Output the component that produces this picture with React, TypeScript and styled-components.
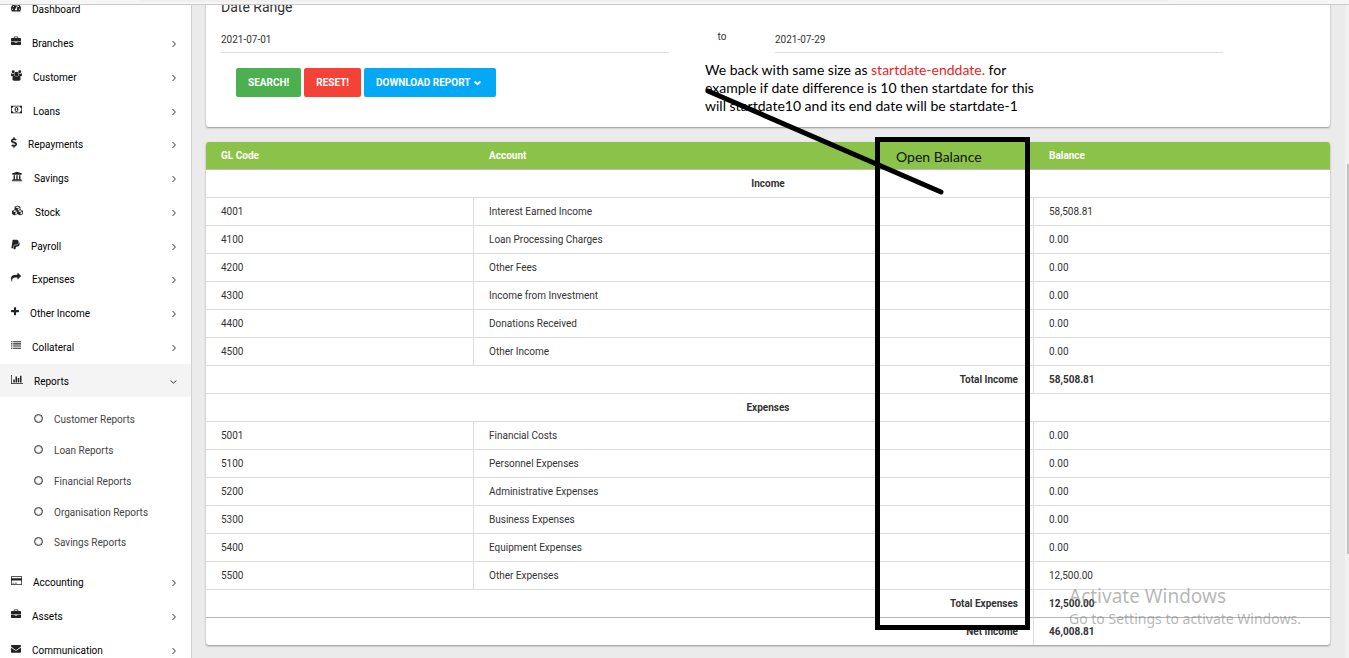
import React from 'react';
import styled, { createGlobalStyle } from 'styled-components';
import { FaCubes, FaDollarSign, FaPaypal, FaTachometerAlt, FaUniversity } from 'react-icons/fa';

const GlobalStyle = createGlobalStyle`
  * { box-sizing: border-box; }
  body {
    margin: 0;
    background: #ebebeb;
    color: #333;
    font: 400 10px/18px Roboto, sans-serif;
  }
  ul { list-style: none; margin: 0; padding: 0; }
  a { color: inherit; text-decoration: none; }
`;

const Shell = styled.div`
  display: flex;
  flex-direction: column;
  height: 100vh;
  overflow: hidden;
  position: relative;
`;

const TopBar = styled.header`
  flex: none;
  height: 5px;
  padding: 0 180px 0 140px;
  background: #f6f6f6;
  border-bottom: 1px solid #cbcbcb;
`;

const AddressStrip = styled.div`
  height: 2px;
  background: #efefef;
  border-radius: 0 0 4px 4px;
`;

const Body = styled.div`
  flex: 1;
  min-height: 0;
  display: flex;
`;

const Sidebar = styled.nav`
  flex: none;
  width: 192px;
  overflow: hidden;
  background: #fff;
  border-right: 1px solid #d2d2d2;
`;

const SidebarScroll = styled.div`
  margin-top: -13px;
`;

const Menu = styled.ul`
  display: grid;
  grid-auto-rows: 34px 34px 34px 33px;
`;

const MenuLink = styled.a<{ $active?: boolean }>`
  display: flex;
  align-items: center;
  gap: 11px;
  height: 100%;
  padding: 2px 14px 0 11px;
  color: #000;
  background: ${(p) => (p.$active ? '#f4f4f4' : 'transparent')};
  > svg { color: #333; }
`;

const IconSlot = styled.span<{ $width: number }>`
  display: flex;
  width: ${(p) => p.$width}px;
  padding-bottom: 5px;
  color: #222;
  svg { display: block; width: 100%; height: 11px; }
`;

const MenuText = styled.span`
  flex: 1;
`;

const Submenu = styled.ul`
  display: grid;
  grid-auto-rows: 31px 31px 31px 30px;
  padding: 7px 0;
`;

const SubmenuLink = styled.a`
  display: flex;
  align-items: center;
  gap: 10px;
  height: 100%;
  padding: 1px 0 0 34px;
  color: #444;
`;

const Ring = styled.span`
  width: 9px;
  height: 9px;
  margin: 0 1px 3px 0;
  border: 1px solid #333;
  outline: 1px solid rgba(51, 51, 51, 0.25);
  outline-offset: -2px;
  border-radius: 50%;
`;

const Main = styled.main`
  flex: 1;
  min-width: 0;
  padding: 0 15px 0 14px;
  overflow: hidden;
`;

const ScrollTrack = styled.div`
  flex: none;
  width: 4px;
  padding: 159px 0 0 2px;
  background: #f1f1f1;
`;

const ScrollThumb = styled.div`
  height: 390px;
  background: #c1c1c1;
`;

const Card = styled.section`
  background: #fff;
  border-radius: 3px;
  box-shadow: 0 1px 2px rgba(0, 0, 0, 0.38);
`;

const FilterCard = styled(Card)`
  position: relative;
  margin-top: -10px;
  padding: 2px 15px 30px;
`;

const Heading = styled.h2`
  margin: 0;
  font: 400 14px/20px Roboto, sans-serif;
`;

const DateRow = styled.div`
  display: grid;
  grid-template-columns: 224fr 53fr 224fr 46fr;
  margin-top: 10px;
`;

const DateInput = styled.input`
  width: 100%;
  height: 26px;
  padding: 0;
  border: 0;
  border-bottom: 1px solid #ddd;
  background: transparent;
  color: #333;
  font: 400 10px/18px Roboto, sans-serif;
`;

const To = styled.span`
  padding-top: 1px;
  text-align: center;
`;

const Actions = styled.div`
  display: flex;
  gap: 3px;
  padding: 15px 15px 0;
`;

const Button = styled.button<{ $color: string }>`
  display: flex;
  align-items: center;
  gap: 3px;
  height: 29px;
  padding: 0 12px;
  border: 0;
  border-radius: 2px;
  background: ${(p) => p.$color};
  color: #fff;
  font: 700 10px/18px Roboto, sans-serif;
  text-transform: uppercase;
  svg { margin: 0 3px 0 0; stroke-width: 2; }
`;

const Report = styled.div`
  position: relative;
  margin-top: 15px;
`;

const TableCard = styled(Card)`
  overflow: hidden;
`;

const Table = styled.table`
  width: 100%;
  table-layout: fixed;
  border-collapse: separate;
  border-spacing: 0;
`;

const CodeCol = styled.col`
  width: 268px;
`;

const BalanceCol = styled.col`
  width: 296px;
`;

const HeadCell = styled.th`
  height: 28px;
  padding: 0 15px;
  background: #8bc34a;
  border-bottom: 1px solid #bbb;
  color: #fff;
  font-weight: 700;
  text-align: left;
`;

const Cell = styled.td<{ $divider?: boolean; $strong?: boolean; $align?: string; $line?: string }>`
  height: ${(p) => (p.$line === 'none' ? 27 : 28)}px;
  padding: 0 15px;
  border-bottom: ${(p) => (p.$line === 'none' ? '0' : `1px solid ${p.$line ?? '#ddd'}`)};
  border-right: ${(p) => (p.$divider ? '1px solid #ddd' : '0')};
  font-weight: ${(p) => (p.$strong ? 700 : 400)};
  text-align: ${(p) => p.$align ?? 'left'};
`;

const Note = styled.p`
  position: absolute;
  left: 499px;
  top: 66px;
  margin: 0;
  color: #000;
  font: 400 14px/18px Lato, sans-serif;
  white-space: nowrap;
`;

const Highlight = styled.span`
  color: #ed1c24;
`;

const MarkedColumn = styled.div`
  position: absolute;
  top: -5px;
  right: 300px;
  width: 155px;
  height: 493px;
  padding: 6px 16px;
  border: 5px solid #000;
  color: #111;
  font: 400 14px/18px Lato, sans-serif;
`;

const Pointer = styled.svg`
  position: absolute;
  top: -55px;
  right: 385px;
  width: 240px;
  height: 110px;
`;

const Watermark = styled.div`
  position: absolute;
  right: 34px;
  bottom: 29px;
  width: 246px;
  color: rgba(110, 110, 110, 0.5);
  font: 400 14px/20px "Noto Sans", sans-serif;
  white-space: nowrap;
`;

const WatermarkTitle = styled.div`
  font-size: 19px;
  line-height: 25px;
`;

type GlyphProps = { w: number; d: string };
const Glyph = ({ w, d }: GlyphProps) => (
  <svg viewBox={`0 0 ${w} 1792`} fill="currentColor" fillRule="evenodd" aria-hidden="true">
    <path d={d} />
  </svg>
);

const Briefcase = () => (
  <Glyph w={1792} d="M640 256h512v-128h-512v128zm1152 640v480q0 66-47 113t-113 47h-1472q-66 0-113-47t-47-113v-480h672v160q0 26 19 45t45 19h320q26 0 45-19t19-45v-160h672zm-768 0v128h-256v-128h256zm768-480v384h-1792v-384q0-66 47-113t113-47h352v-160q0-40 28-68t68-28h576q40 0 68 28t28 68v160h352q66 0 113 47t47 113z" />
);
const Users = () => (
  <Glyph w={1920} d="M593 896q-162 5-265 128H194q-82 0-138-40.500T0 865q0-353 124-353 6 0 43.500 21t97.500 42.500T384 597q67 0 133-23-5 37-5 66 0 139 81 256zM1664 1533q0 120-73 189.500t-194 69.500H523q-121 0-194-69.500T256 1533q0-637 288-637 13 0 76 43t148 77 192 34 192-34 148-77 76-43q288 0 288 637zM640 256a256 256 0 1 1-512 0 256 256 0 1 1 512 0zM1344 640a384 384 0 1 1-768 0 384 384 0 1 1 768 0zM1920 865q0 78-56 118.500t-138 40.500h-134q-103-123-265-128 81-117 81-256 0-29-5-66 66 23 133 23 59 0 119-21.500t97.500-42.500 43.500-21q124 0 124 353zM1792 256a256 256 0 1 1-512 0 256 256 0 1 1 512 0z" />
);
const Money = () => (
  <Glyph w={1920} d="M0 256h1920v1280H0zM384 384q0 106-75 181t-181 75v512q106 0 181 75t75 181h1152q0-106 75-181t181-75V640q-106 0-181-75t-75-181zM960 480c200 0 320 190 320 416s-120 416-320 416-320-190-320-416 120-416 320-416zM896 640l-130 110 80 90 50-40v256H780v96h380v-96h-120V640z" />
);
const Share = () => (
  <Glyph w={1792} d="M1792 640q0 26-19 45l-512 512q-19 19-45 19t-45-19-19-45v-256h-224q-98 0-175.500 6t-154 21.500-133 42.500-105.500 69.500-80 101-48.500 138.500-17.500 181q0 55 5 123 0 6 2.500 23.500t2.500 26.500q0 15-8.500 25t-23.500 10q-16 0-28-17-7-9-13-22t-13.500-30-10.500-24q-127-285-127-451 0-199 53-333 162-403 875-403h224v-256q0-26 19-45t45-19 45 19l512 512q19 19 19 45z" />
);
const Plus = () => (
  <Glyph w={1408} d="M1408 736v192q0 40-28 68t-68 28H896v416q0 40-28 68t-68 28H608q-40 0-68-28t-28-68v-416H96q-40 0-68-28T0 928V736q0-40 28-68t68-28h416V224q0-40 28-68t68-28h192q40 0 68 28t28 68v416h416q40 0 68 28t28 68z" />
);
const List = () => (
  <Glyph w={1792} d="M0 1280h256v192H0zM0 896h256v192H0zM0 512h256v192H0zM384 1280h1408v192H384zM0 128h256v192H0zM384 896h1408v192H384zM384 512h1408v192H384zM384 128h1408v192H384z" />
);
const BarChart = () => (
  <Glyph w={2048} d="M640 896v512h-256v-512h256zm384-512v1024h-256v-1024h256zm1024 1152v128h-2048v-1536h128v1408h1920zm-640-896v768h-256v-768h256zm384-384v1152h-256v-1152h256z" />
);
const CreditCard = () => (
  <Glyph w={1920} d="M1760 128q66 0 113 47t47 113v1216q0 66-47 113t-113 47H160q-66 0-113-47T0 1504V288q0-66 47-113t113-47zM160 256q-13 0-22.500 9.500T128 288v224h1664V288q0-13-9.500-22.500T1760 256zM1760 1536q13 0 22.500-9.500t9.500-22.500V896H128v608q0 13 9.500 22.500t22.500 9.500zM256 1408v-128h256v128zM640 1408v-128h384v128z" />
);
const Envelope = () => (
  <Glyph w={1792} d="M1792 710v794q0 66-47 113t-113 47h-1472q-66 0-113-47t-47-113v-794q44 49 101 87 362 246 497 345 57 42 92.500 65.500t94.500 48 110 24.500h2q51 0 110-24.500t94.500-48 92.500-65.500q170-123 498-345 57-39 100-87zm0-294q0 79-49 151t-122 123q-376 261-468 325-10 7-42.500 31t-54 38.500-52 32.500-57.500 27-50 9h-2q-23 0-50-9t-57.500-27-52-32.500-54-38.500-42.500-31q-91-64-262-182.500t-205-142.500q-62-42-117-115.500t-55-136.500q0-78 41.500-130t118.500-52h1472q65 0 112.500 47t47.500 113z" />
);

const Chevron = ({ down }: { down?: boolean }) => (
  <svg width="7" height="8" viewBox="0 0 7 8" fill="none" stroke="currentColor" aria-hidden="true">
    <path d={down ? 'M0.600 2.500L3.500 5.200L6.400 2.500' : 'M2.500 1L5.400 4L2.500 7'} />
  </svg>
);

type Item = { label: string; icon: React.ReactNode; width: number; active?: boolean; leaf?: boolean };

const primary: Item[] = [
  { label: 'Dashboard', icon: <FaTachometerAlt />, width: 10, leaf: true },
  { label: 'Branches', icon: <Briefcase />, width: 10 },
  { label: 'Customer', icon: <Users />, width: 11 },
  { label: 'Loans', icon: <Money />, width: 11 },
  { label: 'Repayments', icon: <FaDollarSign />, width: 6 },
  { label: 'Savings', icon: <FaUniversity />, width: 12 },
  { label: 'Stock', icon: <FaCubes />, width: 13 },
  { label: 'Payroll', icon: <FaPaypal />, width: 9 },
  { label: 'Expenses', icon: <Share />, width: 10 },
  { label: 'Other Income', icon: <Plus />, width: 8 },
  { label: 'Collateral', icon: <List />, width: 10 },
  { label: 'Reports', icon: <BarChart />, width: 12, active: true },
];

const reports = ['Customer Reports', 'Loan Reports', 'Financial Reports', 'Organisation Reports', 'Savings Reports'];

const secondary: Item[] = [
  { label: 'Accounting', icon: <CreditCard />, width: 11 },
  { label: 'Assets', icon: <Briefcase />, width: 10 },
  { label: 'Communication', icon: <Envelope />, width: 10 },
];

const income = [
  ['4001', 'Interest Earned Income', '58,508.81'],
  ['4100', 'Loan Processing Charges', '0.00'],
  ['4200', 'Other Fees', '0.00'],
  ['4300', 'Income from Investment', '0.00'],
  ['4400', 'Donations Received', '0.00'],
  ['4500', 'Other Income', '0.00'],
];

const expenses = [
  ['5001', 'Financial Costs', '0.00'],
  ['5100', 'Personnel Expenses', '0.00'],
  ['5200', 'Administrative Expenses', '0.00'],
  ['5300', 'Business Expenses', '0.00'],
  ['5400', 'Equipment Expenses', '0.00'],
  ['5500', 'Other Expenses', '12,500.00'],
];

const MenuList = ({ items }: { items: Item[] }) => (
  <Menu>
    {items.map((item) => (
      <li key={item.label}>
        <MenuLink href="#" $active={item.active}>
          <IconSlot $width={item.width}>{item.icon}</IconSlot>
          <MenuText>{item.label}</MenuText>
          {!item.leaf && <Chevron down={item.active} />}
        </MenuLink>
      </li>
    ))}
  </Menu>
);

const SectionRow = ({ title }: { title: string }) => (
  <tr><Cell colSpan={3} $strong $align="center">{title}</Cell></tr>
);

const AccountRows = ({ rows }: { rows: string[][] }) => (
  <>
    {rows.map(([code, account, balance]) => (
      <tr key={code}>
        <Cell $divider>{code}</Cell>
        <Cell $divider>{account}</Cell>
        <Cell>{balance}</Cell>
      </tr>
    ))}
  </>
);

const TotalRow = ({ label, value, line }: { label: string; value: string; line?: string }) => (
  <tr>
    <Cell colSpan={2} $divider $strong $align="right" $line={line}>{label}</Cell>
    <Cell $strong $line={line}>{value}</Cell>
  </tr>
);

export default function App() {
  return (
    <Shell>
      <GlobalStyle />
      <TopBar><AddressStrip /></TopBar>
      <Body>
        <Sidebar>
          <SidebarScroll>
            <MenuList items={primary} />
            <Submenu>
              {reports.map((label) => (
                <li key={label}>
                  <SubmenuLink href="#"><Ring />{label}</SubmenuLink>
                </li>
              ))}
            </Submenu>
            <MenuList items={secondary} />
          </SidebarScroll>
        </Sidebar>
        <Main>
          <FilterCard>
            <Heading>Date Range</Heading>
            <DateRow>
              <DateInput aria-label="Start date" defaultValue="2021-07-01" />
              <To>to</To>
              <DateInput aria-label="End date" defaultValue="2021-07-29" />
            </DateRow>
            <Actions>
              <Button type="button" $color="#4caf50">Search!</Button>
              <Button type="button" $color="#f44336">Reset!</Button>
              <Button type="button" $color="#03a9f4">Download Report <Chevron down /></Button>
            </Actions>
            <Note>
              We back with same size as <Highlight>startdate-enddate.</Highlight> for<br />
              example if date difference is 10 then startdate for this<br />
              will startdate10 and its end date will be startdate-1
            </Note>
          </FilterCard>
          <Report>
            <TableCard>
              <Table>
                <colgroup><CodeCol /><col /><BalanceCol /></colgroup>
                <thead>
                  <tr><HeadCell>GL Code</HeadCell><HeadCell>Account</HeadCell><HeadCell>Balance</HeadCell></tr>
                </thead>
                <tbody>
                  <SectionRow title="Income" />
                  <AccountRows rows={income} />
                  <TotalRow label="Total Income" value="58,508.81" />
                  <SectionRow title="Expenses" />
                  <AccountRows rows={expenses} />
                  <TotalRow label="Total Expenses" value="12,500.00" line="#b5b5b5" />
                  <TotalRow label="Net Income" value="46,008.81" line="none" />
                </tbody>
              </Table>
            </TableCard>
            <MarkedColumn>Open Balance</MarkedColumn>
            <Pointer viewBox="0 0 240 110" aria-hidden="true">
              <path d="M3 4L236 105" stroke="#000" strokeWidth="5" strokeLinecap="round" />
            </Pointer>
          </Report>
        </Main>
        <ScrollTrack><ScrollThumb /></ScrollTrack>
      </Body>
      <Watermark>
        <WatermarkTitle>Activate Windows</WatermarkTitle>
        Go to Settings to activate Windows.
      </Watermark>
    </Shell>
  );
}
